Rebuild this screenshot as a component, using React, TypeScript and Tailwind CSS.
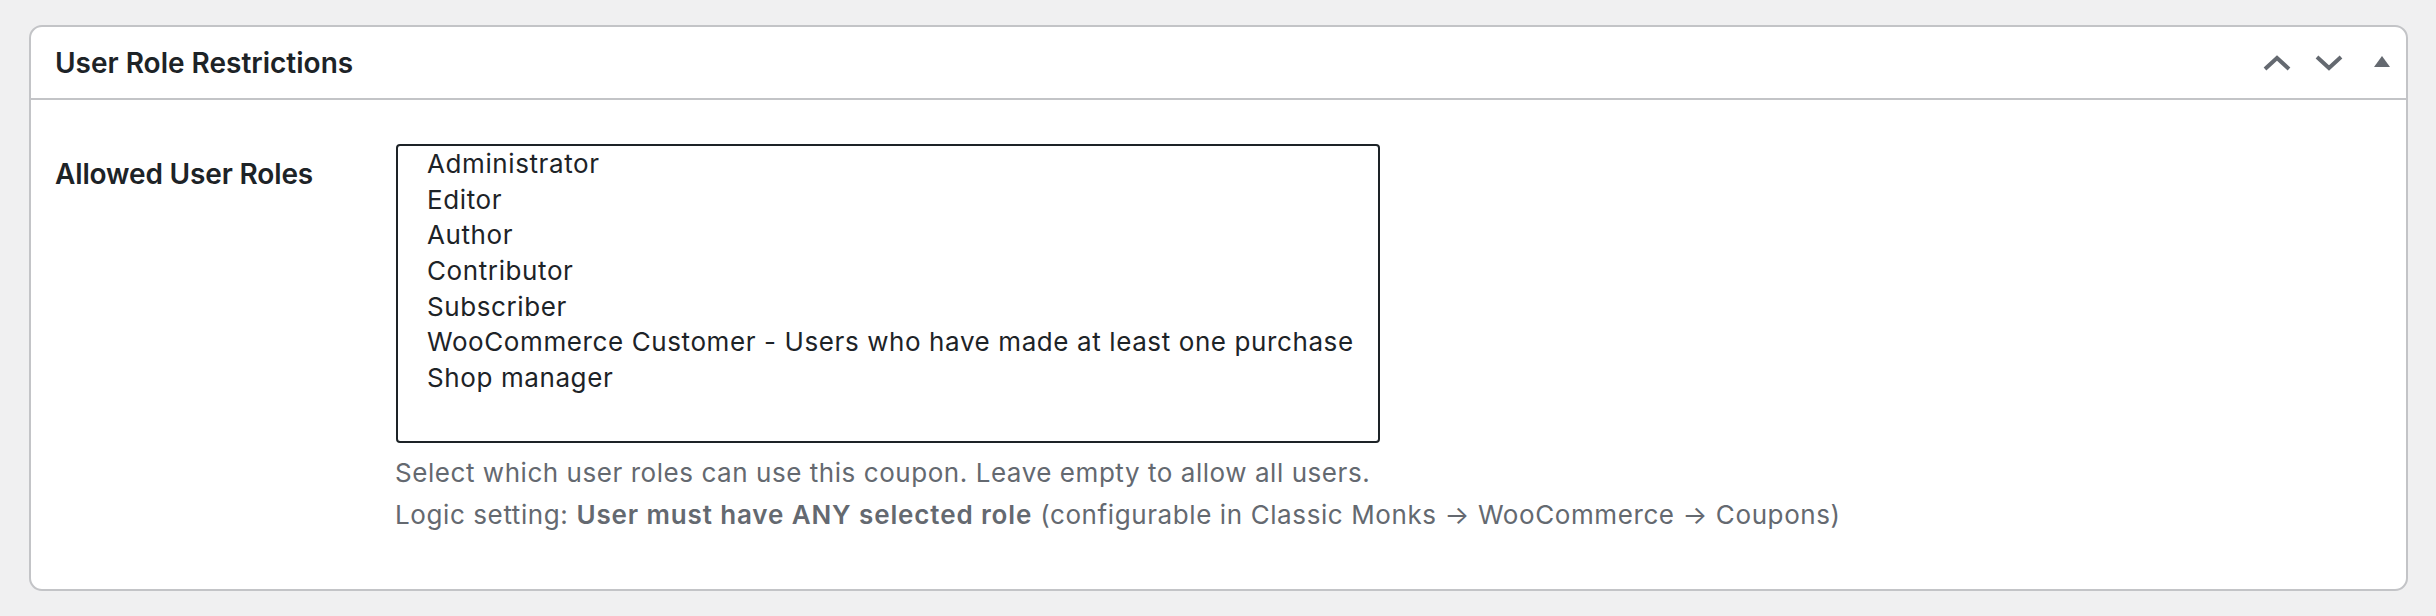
import React from "react";

const roles = [
  "Administrator",
  "Editor",
  "Author",
  "Contributor",
  "Subscriber",
  "WooCommerce Customer - Users who have made at least one purchase",
  "Shop manager",
];

export default function App() {
  return (
    <div
      className="w-full h-[616px] bg-[#f0f0f1] pt-[25px] pl-[29px] pr-[28px]"
      style={{ fontFamily: "Inter, 'Noto Sans', sans-serif" }}
    >
      <div className="h-[566px] bg-white border-2 border-[#c3c4c7] rounded-[13px] flex flex-col">
        <div className="h-[73px] shrink-0 border-b-2 border-[#c3c4c7] flex items-center justify-between pl-[24px] pr-[16px]">
          <h2 className="text-[28px] font-semibold text-[#1d2327] leading-none">User Role Restrictions</h2>
          <div className="flex items-center text-[#646970]">
            <svg width="28" height="16" viewBox="0 0 28 16" className="block">
              <polyline points="2,14 14,3 26,14" fill="none" stroke="currentColor" strokeWidth="4" />
            </svg>
            <svg width="28" height="16" viewBox="0 0 28 16" className="block ml-[24px]">
              <polyline points="2,2 14,13 26,2" fill="none" stroke="currentColor" strokeWidth="4" />
            </svg>
            <svg width="16" height="11" viewBox="0 0 16 11" className="block ml-[31px] -mt-[2px]">
              <polygon points="0,11 8,0 16,11" fill="currentColor" />
            </svg>
          </div>
        </div>
        <div className="flex pl-[24px] pt-[44px]">
          <div className="w-[341px] shrink-0 pt-[10px]">
            <div className="text-[28px] leading-[40px] font-semibold tracking-[-0.15px] text-[#1d2327]">Allowed User Roles</div>
          </div>
          <div className="flex flex-col">
            <div className="w-[984px] h-[299px] border-2 border-[#1d2327] rounded-[4px] pl-[29px]">
              {roles.map((r) => (
                <div key={r} className="h-[35.7px] text-[26px] leading-[35.7px] tracking-[0.6px] text-[#1d2327] whitespace-nowrap">
                  {r}
                </div>
              ))}
            </div>
            <p className="mt-[9px] -ml-[1px] text-[26px] leading-[42px] tracking-[0.55px] text-[#646970] whitespace-nowrap">
              Select which user roles can use this coupon. Leave empty to allow all users.
            </p>
            <p className="-ml-[1px] text-[26px] leading-[42px] tracking-[0.6px] text-[#646970] whitespace-nowrap">
              Logic setting: <strong className="font-semibold tracking-[0.88px]">User must have ANY selected role</strong> (configurable in Classic Monks → WooCommerce → Coupons)
            </p>
          </div>
        </div>
      </div>
    </div>
  );
}
